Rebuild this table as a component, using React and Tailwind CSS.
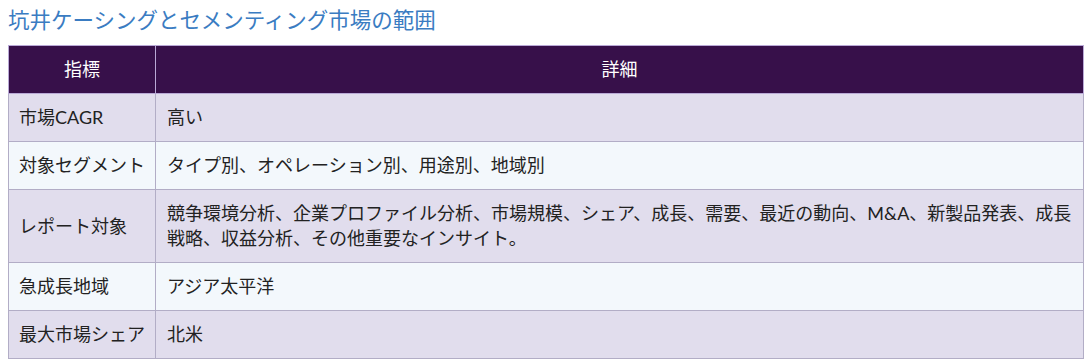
import React from 'react'

const rows = [
  { label: '市場CAGR', value: '高い' },
  { label: '対象セグメント', value: 'タイプ別、オペレーション別、用途別、地域別' },
  {
    label: 'レポート対象',
    value:
      '競争環境分析、企業プロファイル分析、市場規模、シェア、成長、需要、最近の動向、M&A、新製品発表、成長戦略、収益分析、その他重要なインサイト。',
  },
  { label: '急成長地域', value: 'アジア太平洋' },
  { label: '最大市場シェア', value: '北米' },
]

export default function App() {
  return (
    <div
      className="min-h-screen bg-white px-2 pt-[4px]"
      style={{ fontFamily: 'Lato, "Noto Sans CJK JP", sans-serif' }}
    >
      <h2 className="text-[21.5px] leading-[32px] font-normal text-[#3a7cc2]">
        坑井ケーシングとセメンティング市場の範囲
      </h2>
      <table className="mt-[9px] w-full border-collapse text-[18px] leading-[25px] text-[#222]">
        <thead>
          <tr className="bg-[#37104a] text-white">
            <th className="h-[48px] w-[146px] border border-[#b9a9d6] font-normal">指標</th>
            <th className="h-[48px] border border-[#b9a9d6] font-normal">詳細</th>
          </tr>
        </thead>
        <tbody>
          {rows.map((row, i) => (
            <tr key={row.label} className={i % 2 === 0 ? 'bg-[#e1dded]' : 'bg-[#f3f8fc]'}>
              <td className="whitespace-nowrap border border-[#b2adc6] px-[10px] py-[11px] align-middle">
                {row.label}
              </td>
              <td className="border border-[#b2adc6] px-[11px] py-[11px] align-middle">{row.value}</td>
            </tr>
          ))}
        </tbody>
      </table>
    </div>
  )
}
